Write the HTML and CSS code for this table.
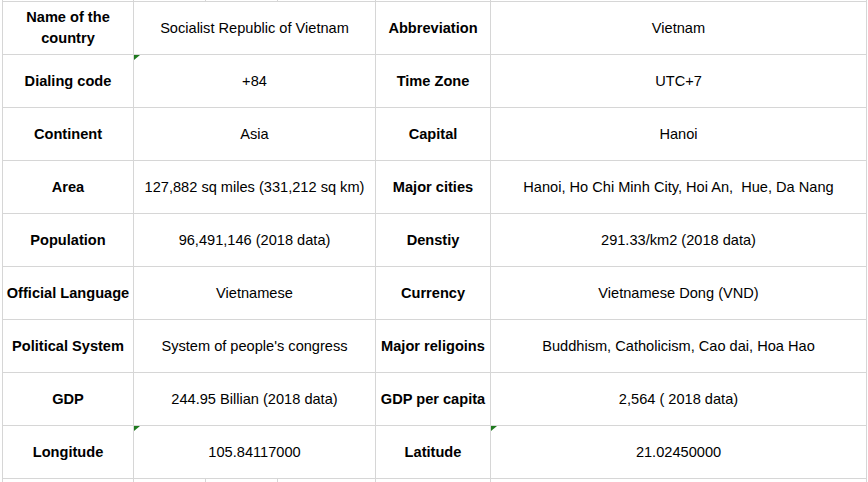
FILE: index.html
```html
<!DOCTYPE html>
<html>
<head>
<meta charset="utf-8">
<link rel="stylesheet" href="styles.css">
</head>
<body>
<div class="sheet">
  <div class="strip"></div><div class="strip"></div><div class="strip"></div><div class="strip"></div><div class="strip"></div><div class="strip"></div>

  <div class="cell head">Name of the<br>country</div>
  <div class="cell val wide">Socialist Republic of Vietnam</div>
  <div class="cell head">Abbreviation</div>
  <div class="cell val">Vietnam</div>

  <div class="cell head">Dialing code</div>
  <div class="cell val wide flag">+84</div>
  <div class="cell head">Time Zone</div>
  <div class="cell val">UTC+7</div>

  <div class="cell head">Continent</div>
  <div class="cell val wide">Asia</div>
  <div class="cell head">Capital</div>
  <div class="cell val">Hanoi</div>

  <div class="cell head">Area</div>
  <div class="cell val wide">127,882 sq miles (331,212 sq km)</div>
  <div class="cell head">Major cities</div>
  <div class="cell val pre">Hanoi, Ho Chi Minh City, Hoi An,  Hue, Da Nang</div>

  <div class="cell head">Population</div>
  <div class="cell val wide">96,491,146 (2018 data)</div>
  <div class="cell head">Denstiy</div>
  <div class="cell val">291.33/km2 (2018 data)</div>

  <div class="cell head">Official Language</div>
  <div class="cell val wide">Vietnamese</div>
  <div class="cell head">Currency</div>
  <div class="cell val">Vietnamese Dong (VND)</div>

  <div class="cell head">Political System</div>
  <div class="cell val wide">System of people's congress</div>
  <div class="cell head">Major religoins</div>
  <div class="cell val">Buddhism, Catholicism, Cao dai, Hoa Hao</div>

  <div class="cell head">GDP</div>
  <div class="cell val wide">244.95 Billian (2018 data)</div>
  <div class="cell head">GDP per capita</div>
  <div class="cell val pre">2,564 ( 2018 data)</div>

  <div class="cell head">Longitude</div>
  <div class="cell val wide flag">105.84117000</div>
  <div class="cell head">Latitude</div>
  <div class="cell val flag">21.02450000</div>

  <div class="strip"></div><div class="strip"></div><div class="strip"></div><div class="strip"></div><div class="strip"></div><div class="strip"></div>
</div>
</body>
</html>
```

FILE: styles.css
```css
html, body {
  margin: 0;
  padding: 0;
  background: #ffffff;
}

body {
  width: 868px;
  height: 482px;
  overflow: hidden;
  font-family: "Liberation Sans", Arial, sans-serif;
  font-size: 14.6px;
  color: #000000;
}

.sheet {
  margin-left: 2px;
  width: 865px;
  box-sizing: border-box;
  padding: 0 1px;
  background: #d6d6d6;
  display: grid;
  grid-template-columns: 130px 71px 71px 97px 114px 375px;
  grid-template-rows: 1px repeat(9, 52px) 10px;
  gap: 1px;
}

.strip {
  background: #ffffff;
}

.cell {
  background: #ffffff;
  display: flex;
  align-items: center;
  justify-content: center;
  text-align: center;
  line-height: 21px;
  position: relative;
}

.head {
  font-weight: bold;
}

.wide {
  grid-column: span 3;
}

.pre {
  white-space: pre;
}

.flag::before {
  content: "";
  position: absolute;
  left: 0;
  top: 0;
  width: 0;
  height: 0;
  border-top: 5px solid #1f7a1f;
  border-right: 6px solid transparent;
}
```
